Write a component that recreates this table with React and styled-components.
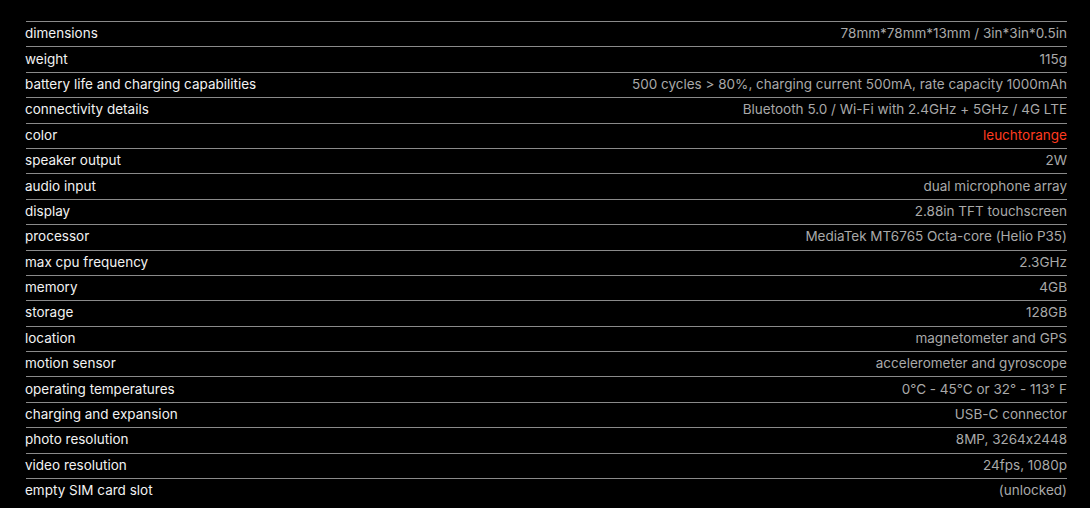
import styled, { createGlobalStyle } from 'styled-components';

const GlobalStyle = createGlobalStyle`
  html, body {
    margin: 0;
    padding: 0;
    background: #000;
  }
`

const Page = styled.div`
  background: #000;
  min-height: 508px;
  padding: 21px 23px 0 26px;
  box-sizing: border-box;
  font-family: Inter, 'Liberation Sans', sans-serif;
  font-feature-settings: 'calt' 0;
`

const Table = styled.div`
  display: flex;
  flex-direction: column;
`

const Row = styled.div`
  display: flex;
  justify-content: space-between;
  align-items: center;
  height: 25.4px;
  padding-bottom: 2px;
  box-sizing: border-box;
  border-top: 1px solid #8a8a8a;
  font-size: 13.5px;
`

const Label = styled.span`
  color: #f2f2f2;
  margin-left: -1px;
`

const Value = styled.span`
  color: ${p => (p.$accent ? '#ff3b1f' : '#a9a9a9')};
`

const specs = [
  ['dimensions', '78mm*78mm*13mm / 3in*3in*0.5in'],
  ['weight', '115g'],
  ['battery life and charging capabilities', '500 cycles > 80%, charging current 500mA, rate capacity 1000mAh'],
  ['connectivity details', 'Bluetooth 5.0 / Wi-Fi with 2.4GHz + 5GHz / 4G LTE'],
  ['color', 'leuchtorange', true],
  ['speaker output', '2W'],
  ['audio input', 'dual microphone array'],
  ['display', '2.88in TFT touchscreen'],
  ['processor', 'MediaTek MT6765 Octa-core (Helio P35)'],
  ['max cpu frequency', '2.3GHz'],
  ['memory', '4GB'],
  ['storage', '128GB'],
  ['location', 'magnetometer and GPS'],
  ['motion sensor', 'accelerometer and gyroscope'],
  ['operating temperatures', '0°C - 45°C or 32° - 113° F'],
  ['charging and expansion', 'USB-C connector'],
  ['photo resolution', '8MP, 3264x2448'],
  ['video resolution', '24fps, 1080p'],
  ['empty SIM card slot', '(unlocked)'],
]

const App = () => {
  return (
    <Page>
      <GlobalStyle />
      <Table>
        {specs.map(([label, value, accent]) => (
          <Row key={label}>
            <Label>{label}</Label>
            <Value $accent={accent}>{value}</Value>
          </Row>
        ))}
      </Table>
    </Page>
  )
}

export default App
